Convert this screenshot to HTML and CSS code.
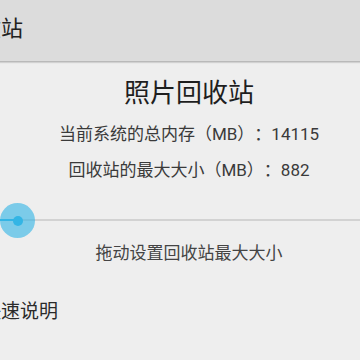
FILE: index.html
```html
<!DOCTYPE html>
<html lang="zh-CN">
<head>
<meta charset="utf-8">
<link rel="stylesheet" href="styles.css">
</head>
<body>
<header class="appbar">
  <span class="appbar-title">照片回收站</span>
</header>
<main class="content">
  <h1 class="title">照片回收站</h1>
  <p class="info info-total">当前系统的总内存（MB）：14115</p>
  <p class="info info-max">回收站的最大大小（MB）：882</p>
  <div class="slider">
    <div class="slider-track">
      <div class="slider-fill"></div>
    </div>
    <div class="slider-thumb"><div class="slider-dot"></div></div>
  </div>
  <p class="hint">拖动设置回收站最大大小</p>
  <p class="section">快速说明</p>
</main>
</body>
</html>
```
FILE: styles.css
```css
html, body {
  margin: 0;
  padding: 0;
}
body {
  width: 360px;
  height: 360px;
  overflow: hidden;
  background: #eeeeee;
  font-family: "Roboto", "Noto Sans CJK SC", sans-serif;
  color: #333333;
  text-spacing-trim: space-all;
}
.appbar {
  height: 61px;
  background: #dcdcdc;
  border-bottom: 1px solid #b9b9b9;
  box-shadow: 0 1px 1px rgba(0, 0, 0, 0.12);
  display: flex;
  align-items: flex-start;
  overflow: hidden;
}
.appbar-title {
  margin-top: 18px;
  margin-left: -87px;
  font-size: 22px;
  line-height: 22px;
  color: #222222;
  white-space: nowrap;
}
.content {
  display: flex;
  flex-direction: column;
}
.title {
  margin: 18px 0 0 18px;
  font-size: 26px;
  line-height: 26px;
  font-weight: normal;
  color: #1e1e1e;
  text-align: center;
}
.info {
  margin: 0 0 0 18px;
  font-size: 17px;
  line-height: 17px;
  color: #3a3a3a;
  text-align: center;
}
.info-total {
  margin-top: 20px;
}
.info-max {
  margin-top: 19px;
}
.slider {
  position: relative;
  height: 36px;
  margin-top: 23px;
  display: flex;
  align-items: center;
}
.slider-track {
  flex: 1;
  height: 2px;
  background: #d2d2d2;
  display: flex;
}
.slider-fill {
  width: 17px;
  background: #33b5e5;
}
.slider-thumb {
  position: absolute;
  left: 0;
  top: 1px;
  width: 35px;
  height: 35px;
  border-radius: 50%;
  background: rgba(51, 181, 229, 0.62);
  display: flex;
  align-items: center;
  justify-content: center;
}
.slider-dot {
  width: 10px;
  height: 10px;
  border-radius: 50%;
  background: #33b5e5;
}
.hint {
  margin: 7px 0 0 18px;
  font-size: 17px;
  line-height: 17px;
  color: #444444;
  text-align: center;
}
.section {
  margin: 40px 0 0 -18px;
  font-size: 19px;
  line-height: 19px;
  color: #2a2a2a;
  white-space: nowrap;
}
```
